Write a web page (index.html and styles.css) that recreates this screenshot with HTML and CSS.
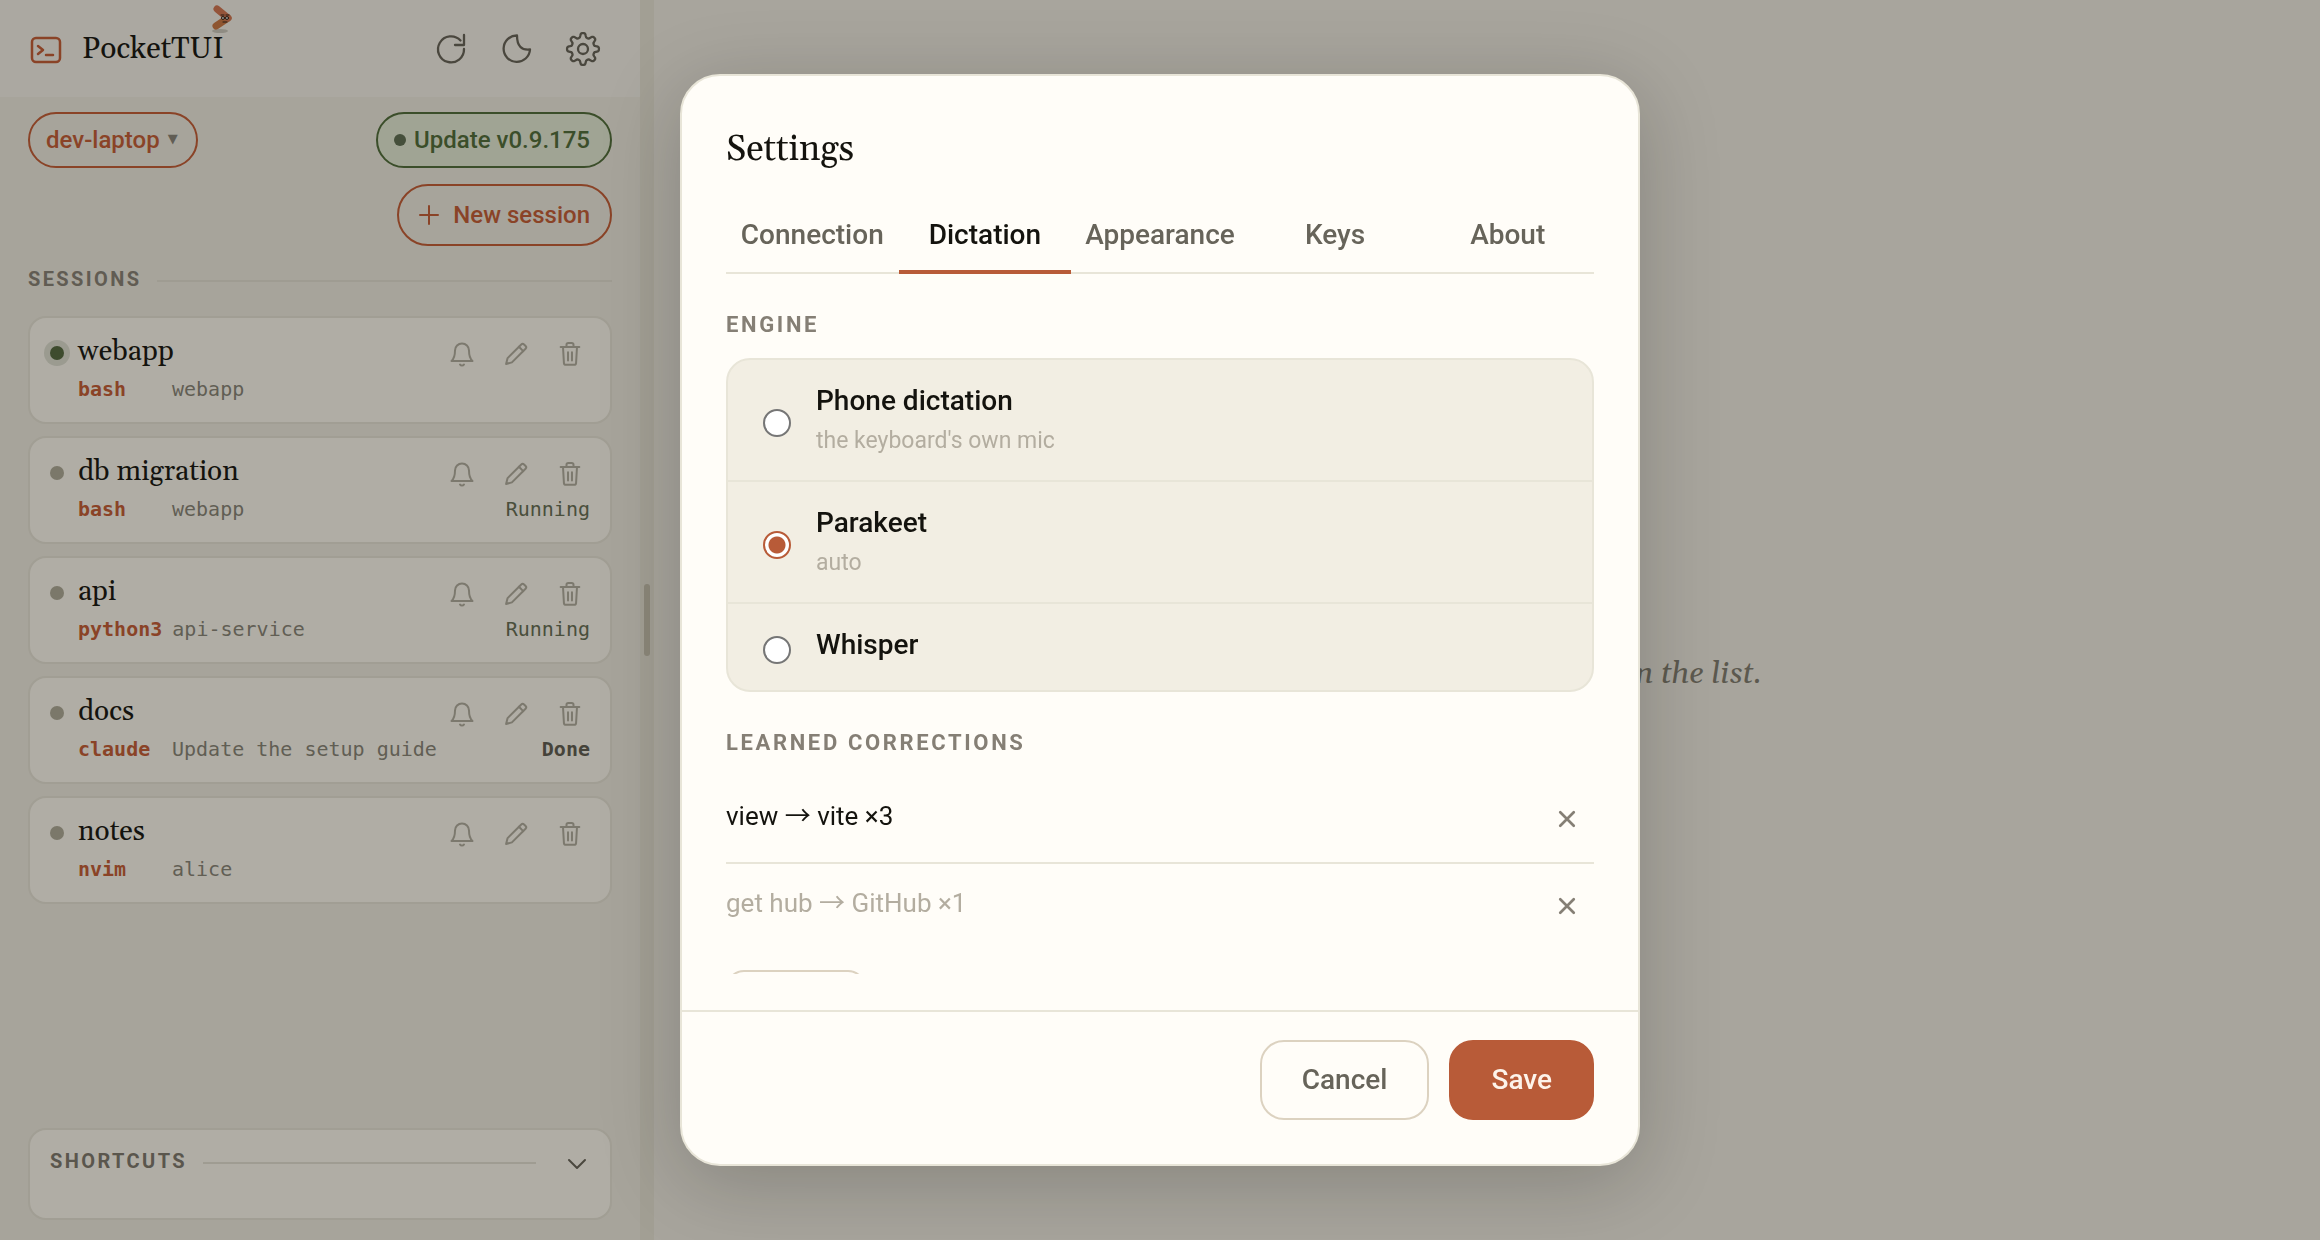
FILE: index.html
```
<!DOCTYPE html>
<html lang="en">

<head>
    <meta charset="UTF-8">
    <meta name="viewport" content="width=device-width, initial-scale=1.0">
    <title>PocketTUI</title>
    <link rel="stylesheet" href="styles.css">
</head>

<body>
    <svg class="sprite" aria-hidden="true">
        <symbol id="bell" viewBox="0 0 24 24">
            <path d="M6 9a6 6 0 0 1 12 0c0 5 .8 7 3 9H3c2.200-2 3-4 3-9z" />
            <path d="M10.300 21a2 2 0 0 0 3.400 0" />
        </symbol>
        <symbol id="pencil" viewBox="0 0 24 24">
            <path d="M3.500 20.500l1.300-5L16.500 3.800a1.700 1.700 0 0 1 2.400 0l1.300 1.300a1.700 1.700 0 0 1 0 2.400L8.500 19.200z" />
            <path d="M14.500 5.800l3.700 3.700" />
        </symbol>
        <symbol id="trash" viewBox="0 0 24 24">
            <path d="M4 6h16M9 6V4a1.500 1.500 0 0 1 1.500-1.500h3A1.500 1.500 0 0 1 15 4v2M6 6l.8 13.800a1.700 1.700 0 0 0 1.700 1.500h7a1.700 1.700 0 0 0 1.700-1.500L18 6M10.300 10.500v7M13.700 10.500v7" />
        </symbol>
        <symbol id="cross" viewBox="0 0 16 16">
            <path d="M2 2l12 12M14 2L2 14" />
        </symbol>
    </svg>

    <div class="app">
        <aside class="sidebar">
            <header class="topbar">
                <svg class="icon logo" viewBox="0 0 32 32">
                    <rect x="2" y="5" width="28" height="24" rx="4" />
                    <path d="M8 13l5 4-5 4M16 22h7" />
                </svg>
                <h1>PocketTUI
                    <svg class="mascot" viewBox="0 0 24 30">
                        <ellipse class="mascot-shadow" cx="12" cy="27" rx="8" ry="2" />
                        <path class="mascot-bottom" d="M20 14L8 22" />
                        <path class="mascot-top" d="M9 5l11 9" />
                        <path class="mascot-face" d="M13 11h3M18 11h3M15 18h4" />
                        <circle class="mascot-eye" cx="15" cy="14" r="1.500" />
                        <circle class="mascot-eye" cx="19" cy="14" r="1.500" />
                    </svg>
                </h1>
                <nav class="tools">
                    <button type="button" aria-label="Reload">
                        <svg class="icon" viewBox="0 0 36 36"><path d="M31 4v10h-9M27.500 9.500A13 13 0 1 0 31 18" /></svg>
                    </button>
                    <button type="button" aria-label="Theme">
                        <svg class="icon" viewBox="0 0 36 36"><path d="M18 4.500A13.200 13.200 0 1 0 31 18.500Q18 20 18 4.500z" /></svg>
                    </button>
                    <button type="button" aria-label="Settings">
                        <svg class="icon" viewBox="0 0 36 36">
                            <circle cx="18" cy="18" r="5" />
                            <path id="gear" d="" />
                        </svg>
                    </button>
                </nav>
            </header>

            <div class="actions">
                <button type="button" class="pill">dev-laptop <span class="caret">▼</span></button>
                <button type="button" class="pill update"><span class="mark"></span>Update v0.9.175</button>
                <button type="button" class="pill new">
                    <svg class="icon" viewBox="0 0 20 20"><path d="M10 1v18M1 10h18" /></svg>New session
                </button>
            </div>

            <h2 class="rule-title">Sessions</h2>
            <ul class="sessions" id="sessions"></ul>

            <section class="shortcuts">
                <h2 class="rule-title">Shortcuts</h2>
                <button type="button" aria-label="Expand shortcuts">
                    <svg class="icon" viewBox="0 0 20 20"><path d="M2 6l8 8 8-8" /></svg>
                </button>
            </section>
        </aside>
        <div class="divider"><span class="grip"></span></div>
        <main class="empty">
            <p>Open a session or pick one from the list.</p>
        </main>
    </div>

    <div class="overlay">
        <form class="dialog" role="dialog" aria-labelledby="dialogTitle">
            <h2 id="dialogTitle">Settings</h2>
            <div class="tabs" role="tablist">
                <button type="button" role="tab">Connection</button>
                <button type="button" role="tab" aria-selected="true">Dictation</button>
                <button type="button" role="tab">Appearance</button>
                <button type="button" role="tab">Keys</button>
                <button type="button" role="tab">About</button>
            </div>
            <div class="panel">
                <h3>Engine</h3>
                <div class="engines">
                    <label>
                        <input type="radio" name="engine" value="phone">
                        <span>Phone dictation<small>the keyboard's own mic</small></span>
                    </label>
                    <label>
                        <input type="radio" name="engine" value="parakeet" checked>
                        <span>Parakeet<small>auto</small></span>
                    </label>
                    <label>
                        <input type="radio" name="engine" value="whisper">
                        <span>Whisper</span>
                    </label>
                </div>
                <h3>Learned corrections</h3>
                <ul class="corrections">
                    <li>
                        <span>view → vite ×3</span>
                        <button type="button" aria-label="Remove"><svg class="icon"><use href="#cross" /></svg></button>
                    </li>
                    <li class="pending">
                        <span>get hub → GitHub ×1</span>
                        <button type="button" aria-label="Remove"><svg class="icon"><use href="#cross" /></svg></button>
                    </li>
                </ul>
                <button type="button" class="add" aria-label="Add correction"></button>
            </div>
            <footer>
                <button type="button" class="cancel">Cancel</button>
                <button type="submit" class="save">Save</button>
            </footer>
        </form>
    </div>

    <script src="app.js"></script>
</body>

</html>
```

FILE: styles.css
```
* {
    box-sizing: border-box;
}

body {
    margin: 0;
    font-family: Roboto, "Liberation Sans", sans-serif;
    font-size: 28px;
    color: #14130e;
    background-color: #a8a59d;
}

h1,
h2,
h3,
p,
ul {
    margin: 0;
    padding: 0;
    font-weight: 400;
}

ul {
    list-style: none;
}

button {
    padding: 0;
    border: none;
    background: none;
    font: inherit;
    color: inherit;
    cursor: pointer;
}

.sprite {
    display: none;
}

.icon {
    display: block;
    fill: none;
    stroke: currentColor;
    stroke-width: 2;
    stroke-linecap: round;
    stroke-linejoin: round;
}

/* page behind the dialog */
.app {
    display: flex;
    height: 100vh;
}

.sidebar {
    display: flex;
    flex-direction: column;
    width: 640px;
    padding-bottom: 20px;
    background-color: #a7a49b;
}

.topbar {
    display: flex;
    align-items: center;
    height: 97px;
    padding: 0 39px 0 30px;
    background-color: #aba8a1;
}

.logo {
    width: 32px;
    height: 32px;
    stroke-width: 2.5;
    color: #8a4327;
}

h1 {
    position: relative;
    margin-left: 20px;
    font-family: Georgia, Gelasio, "Liberation Serif", serif;
    font-size: 30px;
}

.mascot {
    position: absolute;
    right: -8px;
    top: -26px;
    width: 24px;
    height: 30px;
    fill: none;
    stroke-width: 7;
    stroke-linecap: round;
}

.mascot-top {
    stroke: #94543a;
}

.mascot-bottom {
    stroke: #8e5530;
}

.mascot-face {
    stroke: #241a14;
    stroke-width: 1;
}

.mascot-eye {
    fill: #a9a69e;
    stroke: #241a14;
    stroke-width: 1;
}

.mascot-shadow {
    fill: #8f8c83;
}

.tools {
    display: flex;
    gap: 30px;
    margin-left: auto;
    color: #4a473e;
}

.tools .icon {
    width: 36px;
    height: 36px;
    stroke-width: 2.3;
}

.actions {
    display: flex;
    flex-wrap: wrap;
    justify-content: space-between;
    gap: 16px;
    padding: 15px 28px 0;
}

.pill {
    display: flex;
    align-items: center;
    height: 56px;
    padding: 0 18px 0 16px;
    border: 2px solid #8a4327;
    border-radius: 28px;
    font-size: 24px;
    font-weight: 500;
    color: #8a4327;
}

.caret {
    margin: 0 0 4px 8px;
    font-family: "DejaVu Sans", sans-serif;
    font-size: 13px;
    color: #615d54;
}

.update {
    padding-right: 20px;
    border-color: #3b4e2a;
    background-color: #a0a494;
    color: #3b4e2a;
}

.mark {
    width: 12px;
    height: 12px;
    margin-right: 8px;
    border-radius: 50%;
    background-color: #454f3b;
}

.new {
    height: 62px;
    margin-left: auto;
    padding: 0 20px;
    border-radius: 31px;
}

.new .icon {
    width: 20px;
    height: 20px;
    margin-right: 14px;
}

.rule-title {
    display: flex;
    align-items: center;
    gap: 16px;
    margin: 20px 28px 24px;
    font-size: 20px;
    line-height: 26px;
    font-weight: 700;
    letter-spacing: 0.12em;
    text-transform: uppercase;
    color: #615c53;
}

.rule-title::after {
    content: "";
    flex: 1;
    height: 2px;
    margin-top: 4px;
    background-color: #9f9c92;
}

.sessions {
    display: grid;
    gap: 12px;
    padding: 0 28px;
}

.session {
    display: grid;
    grid-template-columns: 48px 1fr auto;
    height: 108px;
    padding: 16px 20px 0 0;
    border: 2px solid #a19e94;
    border-radius: 18px;
    background-color: #b0ada5;
    align-content: start;
}

.status {
    justify-self: end;
    width: 14px;
    height: 14px;
    margin: 12px 14px 0 0;
    border-radius: 50%;
    background-color: #7b786a;
}

.status.live {
    background-color: #3e4c2e;
    box-shadow: 0 0 0 6px #9b9b90;
}

.name {
    font-family: Georgia, Gelasio, "Liberation Serif", serif;
    font-size: 28px;
    line-height: 36px;
}

.tools.small {
    gap: 26px;
    height: 36px;
    margin-right: 6px;
    padding-top: 4px;
    color: #7c796e;
}

.tools.small .icon {
    width: 28px;
    height: 28px;
    stroke-width: 1.7;
}

.details {
    grid-column: 2 / 4;
    display: flex;
    margin-top: 7px;
    font-family: "DejaVu Sans Mono", monospace;
    font-size: 20px;
    line-height: 24px;
    color: #615e54;
}

.details b {
    min-width: 94px;
    padding-right: 10px;
    color: #8a4327;
}

.state {
    margin-left: auto;
    color: #4a4f3c;
}

.state.done {
    font-weight: 700;
    color: #45433a;
}

.shortcuts {
    display: flex;
    align-items: flex-start;
    height: 92px;
    margin: auto 28px 0;
    border: 2px solid #a19e94;
    border-radius: 18px;
    background-color: #b0ada5;
}

.shortcuts .rule-title {
    flex: 1;
    margin: 18px 31px 0 20px;
    color: #5a564d;
}

.shortcuts .icon {
    width: 20px;
    height: 20px;
    margin: 24px 23px 0 0;
    color: #4a473e;
}

.divider {
    display: flex;
    align-items: center;
    justify-content: center;
    width: 14px;
    background-color: #a29f94;
}

.grip {
    width: 6px;
    height: 72px;
    border-radius: 3px;
    background-color: #8b8779;
}

.empty {
    flex: 1;
    display: flex;
    align-items: center;
    justify-content: center;
    padding-top: 108px;
    font-family: Georgia, Gelasio, "Liberation Serif", serif;
    font-size: 31px;
    font-style: italic;
    color: #5c594f;
}

/* settings dialog */
.overlay {
    position: fixed;
    inset: 0;
    display: flex;
    align-items: center;
    justify-content: center;
}

.dialog {
    display: flex;
    flex-direction: column;
    width: 960px;
    height: 88vh;
    max-width: 94vw;
    overflow: hidden;
    border: 2px solid #e8e5d8;
    border-radius: 40px;
    background-color: #fffdf8;
    box-shadow: 0 16px 80px rgba(20, 19, 14, 0.22);
}

.dialog h2 {
    margin: 50px 44px 0;
    font-family: Georgia, Gelasio, "Liberation Serif", serif;
    font-size: 36px;
    line-height: 48px;
}

.tabs {
    display: grid;
    grid-template-columns: repeat(5, 1fr);
    margin: 24px 44px 0;
    border-bottom: 2px solid #e8e5d8;
}

.tabs button {
    height: 76px;
    margin-bottom: -2px;
    padding: 0 14px;
    border-bottom: 4px solid transparent;
    font-weight: 500;
    color: #67645a;
}

.tabs button[aria-selected="true"] {
    border-bottom-color: #b85b38;
    color: #14130e;
}

.panel {
    flex: 1;
    min-height: 0;
    overflow: hidden;
    margin: 0 44px 36px;
}

.panel h3 {
    margin: 37px 0 19px;
    font-size: 22px;
    line-height: 28px;
    font-weight: 700;
    letter-spacing: 0.12em;
    text-transform: uppercase;
    color: #857f75;
}

.engines {
    border: 2px solid #e8e5d8;
    border-radius: 24px;
    background-color: #f2eee3;
}

.engines label {
    display: flex;
    align-items: center;
    gap: 25px;
    min-height: 88px;
    padding: 21px 35px 19px;
    font-weight: 500;
    line-height: 40px;
}

.engines label + label {
    border-top: 2px solid #e8e5d8;
}

.engines span {
    align-self: flex-start;
}

.engines input {
    appearance: none;
    width: 28px;
    height: 28px;
    margin: 4px 0 0;
    border: 2px solid #767676;
    border-radius: 50%;
    background-color: #fff;
}

.engines input:checked {
    border-color: #b85b38;
    background: radial-gradient(circle, #b85b38 8px, #fff 9px);
}

.engines small {
    display: block;
    font-size: 23px;
    font-weight: 400;
    color: #b3ada0;
}

.corrections li {
    display: flex;
    align-items: center;
    justify-content: space-between;
    height: 86px;
    font-family: Roboto, "Noto Sans CJK JP", sans-serif;
    font-size: 26px;
    line-height: 36px;
}

.corrections li + li {
    border-top: 2px solid #e8e5d8;
}

.corrections span {
    padding-bottom: 6px;
}

.corrections .pending {
    color: #b3ada0;
}

.corrections button {
    padding: 18px;
    color: #857f75;
}

.corrections .icon {
    width: 18px;
    height: 18px;
    stroke-width: 2.4;
}

.add {
    width: 140px;
    height: 60px;
    margin-top: 22px;
    border: 2px solid #dcd2c0;
    border-radius: 18px;
}

.dialog footer {
    display: flex;
    justify-content: flex-end;
    gap: 20px;
    padding: 28px 44px 44px;
    border-top: 2px solid #e8e5d8;
}

.dialog footer button {
    height: 80px;
    padding: 0 40px;
    border: 2px solid #dcd2c0;
    border-radius: 24px;
    font-weight: 500;
    color: #67645a;
}

.dialog footer .save {
    border-color: #b85b38;
    background-color: #b85b38;
    color: #fdf3ea;
}
```

FILE: app.js
```
const sessions = [
    { name: 'webapp', command: 'bash', title: 'webapp', live: true },
    { name: 'db migration', command: 'bash', title: 'webapp', state: 'Running' },
    { name: 'api', command: 'python3', title: 'api-service', state: 'Running' },
    { name: 'docs', command: 'claude', title: 'Update the setup guide', state: 'Done' },
    { name: 'notes', command: 'nvim', title: 'alice' }
];

function iconButton(icon, label) {
    return `<button type="button" aria-label="${label}"><svg class="icon"><use href="#${icon}" /></svg></button>`;
}

const list = document.getElementById('sessions');
for (const s of sessions) {
    const item = document.createElement('li');
    item.className = 'session';
    item.innerHTML = `
        <span class="status${s.live ? ' live' : ''}"></span>
        <span class="name">${s.name}</span>
        <span class="tools small">${iconButton('bell', 'Notify')}${iconButton('pencil', 'Rename')}${iconButton('trash', 'Delete')}</span>
        <span class="details"><b>${s.command}</b>${s.title}
            <span class="state${s.state === 'Done' ? ' done' : ''}">${s.state || ''}</span>
        </span>`;
    list.appendChild(item);
}

// eight-toothed gear outline
const points = [];
for (let deg = 0; deg < 360; deg += 3) {
    const a = deg * Math.PI / 180;
    const r = 13.8 + 2.2 * Math.tanh(2 * Math.cos(8 * a));
    points.push((18 + r * Math.sin(a)).toFixed(2) + ' ' + (18 - r * Math.cos(a)).toFixed(2));
}
document.getElementById('gear').setAttribute('d', 'M' + points.join('L') + 'z');
```
